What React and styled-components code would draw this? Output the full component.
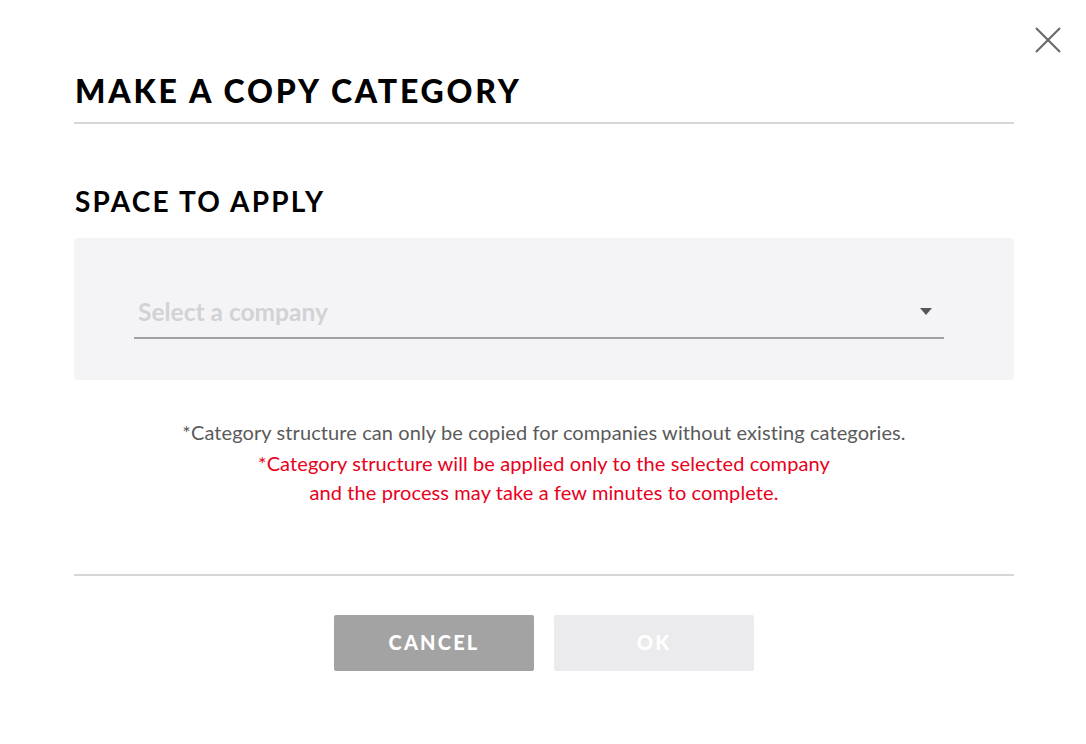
import React from "react";
import styled, { createGlobalStyle } from "styled-components";

const Global = createGlobalStyle`
  html, body { margin: 0; padding: 0; background: #fff; }
  body { font-family: Lato, "Noto Sans", sans-serif; }
`;

const Modal = styled.div`
  position: relative;
  width: 1086px;
  height: 744px;
  box-sizing: border-box;
  padding: 74px 72px 0 74px;
  background: #fff;
`;

const CloseButton = styled.button`
  position: absolute;
  top: 26px;
  right: 24px;
  width: 28px;
  height: 28px;
  padding: 0;
  border: 0;
  background: none;
  cursor: pointer;
`;

const Title = styled.h1`
  margin: 0;
  padding: 0 0 0 1px;
  font-family: Lato, sans-serif;
  font-weight: 900;
  font-size: 32px;
  line-height: 34px;
  letter-spacing: 2.8px;
  color: #000;
`;

const Divider = styled.hr`
  margin: ${(p) => p.$top || 0}px 0 0;
  border: 0;
  height: 2px;
  background: #d6d6d6;
`;

const Section = styled.h2`
  margin: 62px 0 0;
  padding-left: 1px;
  font-family: Lato, sans-serif;
  font-weight: 700;
  font-size: 28px;
  line-height: 30px;
  letter-spacing: 2.2px;
  color: #000;
`;

const Panel = styled.div`
  margin-top: 22px;
  height: 142px;
  box-sizing: border-box;
  padding: 51px 70px 0 60px;
  background: #f4f4f6;
  border-radius: 4px;
`;

const SelectField = styled.div`
  display: flex;
  align-items: center;
  justify-content: space-between;
  height: 50px;
  box-sizing: border-box;
  padding: 0 12px 4px 4px;
  border-bottom: 2px solid #a2a2a2;
`;

const Placeholder = styled.span`
  font-family: Lato, sans-serif;
  font-weight: 700;
  font-size: 24.5px;
  color: #d2d2d4;
`;

const Caret = styled.span`
  width: 0;
  height: 0;
  border-left: 6px solid transparent;
  border-right: 6px solid transparent;
  border-top: 7px solid #555;
`;

const Notes = styled.div`
  margin-top: 38px;
  height: 156px;
  text-align: center;
  font-family: Lato, sans-serif;
  font-size: 20px;
  line-height: 29px;
  letter-spacing: 0.1px;
`;

const Note = styled.p`
  margin: 0;
  color: ${(p) => (p.$warn ? "#e8001c" : "#5a5a5a")};
  ${(p) => p.$gap && "margin-top: 2px;"}
`;

const Actions = styled.div`
  display: flex;
  justify-content: center;
  gap: 20px;
  margin-top: 39px;
`;

const Button = styled.button`
  width: 200px;
  height: 56px;
  padding: 0 0 3px;
  border: 0;
  border-radius: 2px;
  background: ${(p) => (p.$disabled ? "#ebebed" : "#a3a3a3")};
  color: #fff;
  font-family: Lato, sans-serif;
  font-weight: 900;
  font-size: 20px;
  letter-spacing: 2.2px;
  cursor: ${(p) => (p.$disabled ? "default" : "pointer")};
`;

export default function App() {
  return (
    <>
      <Global />
      <Modal>
        <CloseButton aria-label="Close">
          <svg width="28" height="28" viewBox="0 0 28 28">
            <path d="M2 2 L26 26 M26 2 L2 26" stroke="#666" strokeWidth="2" />
          </svg>
        </CloseButton>
        <Title>MAKE A COPY CATEGORY</Title>
        <Divider $top={14} />
        <Section>SPACE TO APPLY</Section>
        <Panel>
          <SelectField>
            <Placeholder>Select a company</Placeholder>
            <Caret />
          </SelectField>
        </Panel>
        <Notes>
          <Note>*Category structure can only be copied for companies without existing categories.</Note>
          <Note $warn $gap>*Category structure will be applied only to the selected company</Note>
          <Note $warn>and the process may take a few minutes to complete.</Note>
        </Notes>
        <Divider />
        <Actions>
          <Button>CANCEL</Button>
          <Button $disabled>OK</Button>
        </Actions>
      </Modal>
    </>
  );
}
